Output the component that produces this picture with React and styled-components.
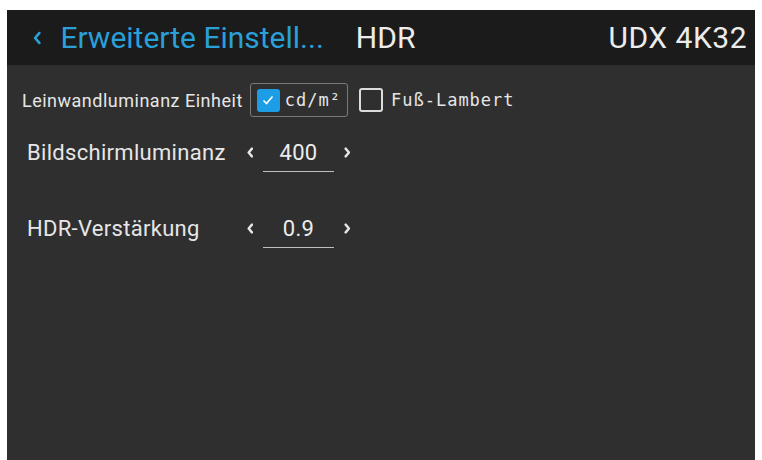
import React from 'react';
import styled, { createGlobalStyle } from 'styled-components';

const GlobalStyle = createGlobalStyle`
  body {
    margin: 0;
    background: #ffffff;
    font-family: Roboto, "Liberation Sans", sans-serif;
  }
`;

const Screen = styled.div`
  margin: 10px 0 0 7px;
  width: 748px;
  height: 450px;
  background: #2f2f2f;
  display: flex;
  flex-direction: column;
`;

const Header = styled.div`
  height: 55px;
  background: #1b1b1b;
  display: flex;
  align-items: center;
  padding: 0 8px 0 26px;
`;

const Back = styled.button`
  display: flex;
  align-items: center;
  gap: 19px;
  background: none;
  border: none;
  padding: 0;
  color: #2a9fd8;
  font-family: Roboto, "Liberation Sans", sans-serif;
  font-size: 30px;
  cursor: pointer;
`;

const Title = styled.span`
  margin-left: 32px;
  color: #ececec;
  font-size: 30px;
`;

const Device = styled.span`
  margin-left: auto;
  color: #ececec;
  font-size: 30px;
  letter-spacing: 0.5px;
`;

const Body = styled.div`
  display: flex;
  flex-direction: column;
  padding: 18px 0 0 15px;
`;

const UnitRow = styled.div`
  display: flex;
  align-items: center;
  height: 34px;
`;

const UnitLabel = styled.span`
  color: #e6e6e6;
  font-size: 18px;
  letter-spacing: 0.5px;
  margin-right: 7px;
`;

const Option = styled.label`
  display: flex;
  align-items: center;
  gap: ${p => (p.selected ? 5 : 8)}px;
  height: 32px;
  padding: 0 6px;
  border: 1px solid ${p => (p.selected ? '#7a7a7a' : 'transparent')};
  border-radius: 3px;
  color: #e6e6e6;
  font-family: "DejaVu Sans Mono", "Liberation Mono", monospace;
  font-size: 17px;
  letter-spacing: 1px;
  margin-right: 4px;
`;

const Box = styled.span`
  width: ${p => (p.checked ? 23 : 24)}px;
  height: ${p => (p.checked ? 23 : 24)}px;
  box-sizing: border-box;
  border-radius: 3px;
  display: flex;
  align-items: center;
  justify-content: center;
  background: ${p => (p.checked ? '#1c9de6' : 'transparent')};
  border: ${p => (p.checked ? 'none' : '2px solid #dcdcdc')};
`;

const SettingRow = styled.div`
  display: flex;
  align-items: center;
  height: 40px;
  padding-left: 5px;
  margin-top: ${p => p.gap || 0}px;
`;

const SettingLabel = styled.span`
  width: 216px;
  color: #e6e6e6;
  font-size: 22px;
  letter-spacing: 0.3px;
`;

const Stepper = styled.div`
  display: flex;
  align-items: center;
`;

const Arrow = styled.span`
  width: 14px;
  display: flex;
  justify-content: center;
`;

const Value = styled.span`
  position: relative;
  width: 71px;
  margin: 0 6px;
  text-align: center;
  color: #ececec;
  font-size: 22px;
  letter-spacing: 0.3px;

  &::after {
    content: '';
    position: absolute;
    left: 0;
    right: 0;
    bottom: -7px;
    height: 1px;
    background: #bdbdbd;
  }
`;

const Chevron = ({ dir = 'left', color = '#e6e6e6', size = 11, weight = 2.2 }) => (
  <svg width={size * 0.6} height={size} viewBox="0 0 6 10">
    <path
      d={dir === 'left' ? 'M4.5 1.5 L1.5 5 L4.5 8.5' : 'M1.5 1.5 L4.5 5 L1.5 8.5'}
      fill="none"
      stroke={color}
      strokeWidth={weight}
      strokeLinecap="round"
      strokeLinejoin="round"
    />
  </svg>
);

const Check = () => (
  <svg width="14" height="14" viewBox="0 0 14 14">
    <path d="M2.5 7.5 L5.5 10.5 L11.5 3.5" fill="none" stroke="#ffffff" strokeWidth="1.6" />
  </svg>
);

const Setting = ({ label, value, gap }) => (
  <SettingRow gap={gap}>
    <SettingLabel>{label}</SettingLabel>
    <Stepper>
      <Arrow><Chevron dir="left" /></Arrow>
      <Value>{value}</Value>
      <Arrow><Chevron dir="right" /></Arrow>
    </Stepper>
  </SettingRow>
);

export default function App() {
  return (
    <>
      <GlobalStyle />
      <Screen>
        <Header>
          <Back>
            <Chevron dir="left" color="#2a9fd8" size={14} weight={1.9} />
            Erweiterte Einstell...
          </Back>
          <Title>HDR</Title>
          <Device>UDX 4K32</Device>
        </Header>
        <Body>
          <UnitRow>
            <UnitLabel>Leinwandluminanz Einheit</UnitLabel>
            <Option selected>
              <Box checked><Check /></Box>
              cd/m²
            </Option>
            <Option>
              <Box />
              Fuß-Lambert
            </Option>
          </UnitRow>
          <Setting label="Bildschirmluminanz" value="400" gap={15} />
          <Setting label="HDR-Verstärkung" value="0.9" gap={36} />
        </Body>
      </Screen>
    </>
  );
}
